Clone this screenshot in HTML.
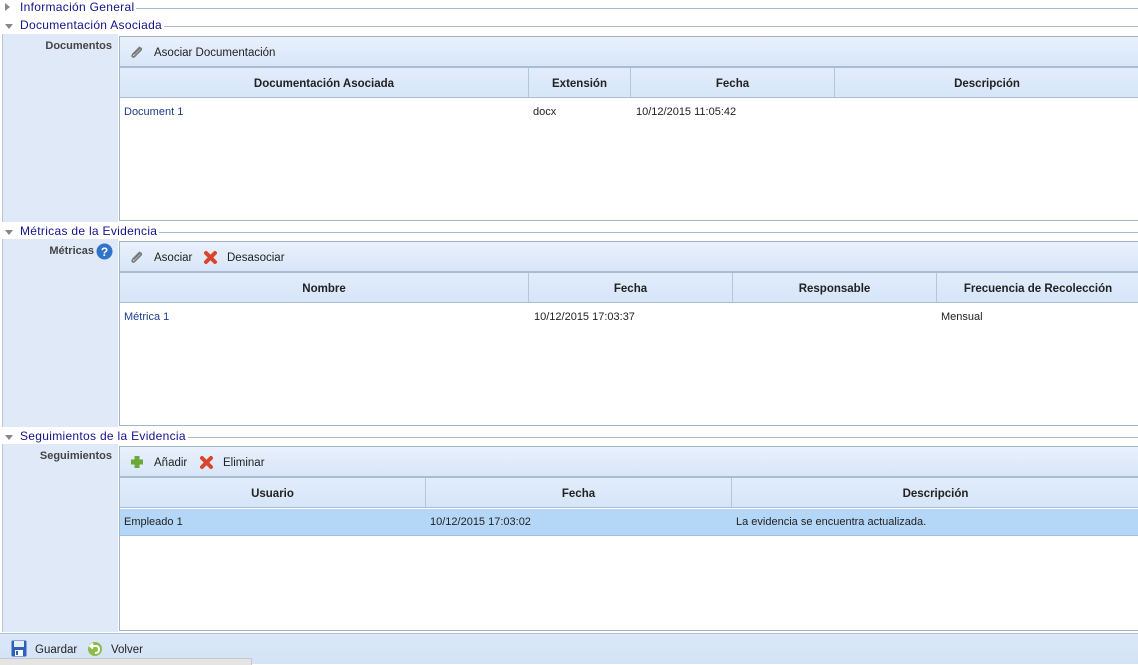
<!DOCTYPE html>
<html><head><meta charset="utf-8"><style>
*{margin:0;padding:0;box-sizing:border-box}
body{width:1138px;height:664px;overflow:hidden;background:#fff;font-family:"DejaVu Sans","Liberation Sans",sans-serif;font-size:11px;color:#222;position:relative}
.a{position:absolute}
.leg{position:absolute;left:0;height:14px;width:1138px}
.leg .line{position:absolute;left:4px;right:0;top:8px;border-top:1px solid #a9b9cc}
.leg .t{position:absolute;left:14px;top:0px;background:#fff;padding-left:6px;padding-right:2px;color:#12128a;font-size:12px;font-family:"Liberation Sans",sans-serif;letter-spacing:0.3px}
.leg .w{position:absolute;left:0;top:0;width:16px;height:14px;background:#fff}
.leg .tri{position:absolute;left:5px;top:4px;width:0;height:0}
.left{position:absolute;left:2px;width:116px;background:#dfe9f7;border-left:1px solid #b8c6d8}
.lab{position:absolute;right:6px;top:6px;font-weight:bold;color:#444;font-size:11px;font-family:"Liberation Sans",sans-serif}
.panel{position:absolute;left:119px;width:1019px;border:1px solid #9fb3cc;border-right:none;background:#fff}
.tb{position:absolute;left:0;right:0;top:0;height:31px;background:linear-gradient(#e9f1fc,#d8e6f8);border-bottom:2px solid #a9bcd3}
.tb span{position:absolute;top:10px;font-family:"Liberation Sans",sans-serif;font-size:11.5px;color:#222}
.hd{position:absolute;left:0;right:0;top:31px;height:30px;background:linear-gradient(#e2edfb,#d6e5f8);border-bottom:1px solid #a9bcd3}
.hd div{position:absolute;top:0;height:29px;line-height:33px;text-align:center;font-weight:bold;font-family:"Liberation Sans",sans-serif;font-size:11.5px;color:#222;border-right:1px solid #b4c6dc}
.c{position:absolute;font-family:"Liberation Sans",sans-serif;font-size:11px}
.lnk{color:#1c3d8c}
</style></head><body>

<div class="leg" style="top:0"><div class="line"></div><div class="w"></div><div class="tri" style="border-left:5px solid #888;border-top:4px solid transparent;border-bottom:4px solid transparent;top:3px"></div><div class="t">Información General</div></div>
<div class="leg" style="top:18px"><div class="line"></div><div class="w"></div><div class="tri" style="border-top:5px solid #888;border-left:4px solid transparent;border-right:4px solid transparent;top:6px"></div><div class="t">Documentación Asociada</div></div>

<div class="left" style="top:34px;height:188px"><div class="lab">Documentos</div></div>
<div class="panel" style="top:36px;height:185px">
 <div class="tb"><svg class="a" style="left:9px;top:7px" width="16" height="16" viewBox="0 0 16 16"><path d="M11 3 L4 10 Q2 13 5 13 L12 6 Q13 4 11 4 L5 10" fill="none" stroke="#777" stroke-width="1.6"/></svg><span style="left:34px">Asociar Documentación</span></div>
 <div class="hd"><div style="left:0;width:409px">Documentación Asociada</div><div style="left:409px;width:102px">Extensión</div><div style="left:511px;width:204px">Fecha</div><div style="left:715px;width:304px;border-right:none">Descripción</div></div>
 <div class="c lnk" style="left:4px;top:69px">Document 1</div><div class="c" style="left:413px;top:69px">docx</div><div class="c" style="left:516px;top:69px">10/12/2015 11:05:42</div>
</div>

<div class="leg" style="top:224px"><div class="line"></div><div class="w"></div><div class="tri" style="border-top:5px solid #888;border-left:4px solid transparent;border-right:4px solid transparent;top:6px"></div><div class="t">Métricas de la Evidencia</div></div>
<div class="left" style="top:239px;height:188px"><div class="lab" style="right:24px">Métricas</div><svg class="a" style="right:5px;top:4px" width="17" height="17" viewBox="0 0 17 17"><circle cx="8.5" cy="8.5" r="8" fill="#2f74c9"/><text x="8.5" y="13" font-size="12" font-weight="bold" fill="#fff" text-anchor="middle" font-family="Liberation Sans">?</text></svg></div>
<div class="panel" style="top:241px;height:185px">
 <div class="tb"><svg class="a" style="left:9px;top:7px" width="16" height="16" viewBox="0 0 16 16"><path d="M11 3 L4 10 Q2 13 5 13 L12 6 Q13 4 11 4 L5 10" fill="none" stroke="#777" stroke-width="1.6"/></svg><span style="left:34px">Asociar</span><svg class="a" style="left:83px;top:8px" width="15" height="15" viewBox="0 0 15 15"><path d="M3 3 L12 12 M12 3 L3 12" stroke="#d9442c" stroke-width="4" stroke-linecap="round"/></svg><span style="left:107px">Desasociar</span></div>
 <div class="hd"><div style="left:0;width:409px">Nombre</div><div style="left:409px;width:204px">Fecha</div><div style="left:613px;width:204px">Responsable</div><div style="left:817px;width:202px;border-right:none">Frecuencia de Recolección</div></div>
 <div class="c lnk" style="left:4px;top:69px">Métrica 1</div><div class="c" style="left:414px;top:69px">10/12/2015 17:03:37</div><div class="c" style="left:821px;top:69px">Mensual</div>
</div>

<div class="leg" style="top:429px"><div class="line"></div><div class="w"></div><div class="tri" style="border-top:5px solid #888;border-left:4px solid transparent;border-right:4px solid transparent;top:6px"></div><div class="t">Seguimientos de la Evidencia</div></div>
<div class="left" style="top:444px;height:188px"><div class="lab">Seguimientos</div></div>
<div class="panel" style="top:446px;height:185px">
 <div class="tb"><svg class="a" style="left:9px;top:7px" width="16" height="16" viewBox="0 0 16 16"><path d="M8 2 V14 M2 8 H14" stroke="#6aa83a" stroke-width="5"/></svg><span style="left:34px">Añadir</span><svg class="a" style="left:79px;top:8px" width="15" height="15" viewBox="0 0 15 15"><path d="M3 3 L12 12 M12 3 L3 12" stroke="#d9442c" stroke-width="4" stroke-linecap="round"/></svg><span style="left:103px">Eliminar</span></div>
 <div class="hd"><div style="left:0;width:306px">Usuario</div><div style="left:306px;width:306px">Fecha</div><div style="left:612px;width:407px;border-right:none">Descripción</div></div>
 <div class="a" style="left:0;right:0;top:62px;height:27px;background:#b5d7f7;border-bottom:1px solid #9fc0e0"></div>
 <div class="c" style="left:4px;top:69px">Empleado 1</div><div class="c" style="left:310px;top:69px">10/12/2015 17:03:02</div><div class="c" style="left:616px;top:69px">La evidencia se encuentra actualizada.</div>
</div>

<div class="a" style="left:0;top:633px;width:1138px;height:31px;background:linear-gradient(#dce8f8,#d3e2f6);border-top:1px solid #b3c3d6">
 <svg class="a" style="left:11px;top:6px" width="16" height="17" viewBox="0 0 16 17"><rect x="0.5" y="0.5" width="15" height="16" rx="1" fill="#2d62b8"/><rect x="3" y="1" width="10" height="6" fill="#e8eef8"/><rect x="4" y="10" width="8" height="6" fill="#fff"/><rect x="5" y="11" width="2" height="4" fill="#2d62b8"/></svg>
 <span class="c" style="left:35px;top:10px;font-size:11.5px">Guardar</span>
 <svg class="a" style="left:87px;top:7px" width="16" height="16" viewBox="0 0 16 16"><circle cx="8" cy="8" r="7" fill="#8dbb4c"/><path d="M4 5 H9 Q12 5 12 8.5 Q12 12 8 12" fill="none" stroke="#fff" stroke-width="2"/><path d="M6 2.5 L3 5 L6 7.5" fill="none" stroke="#fff" stroke-width="2"/></svg>
 <span class="c" style="left:111px;top:10px;font-size:11.5px">Volver</span>
 <div class="a" style="left:0;top:24px;width:252px;height:7px;background:#e4e4e4;border-top:1px solid #c8c8c8;border-right:1px solid #c8c8c8"></div>
</div>
</body></html>
